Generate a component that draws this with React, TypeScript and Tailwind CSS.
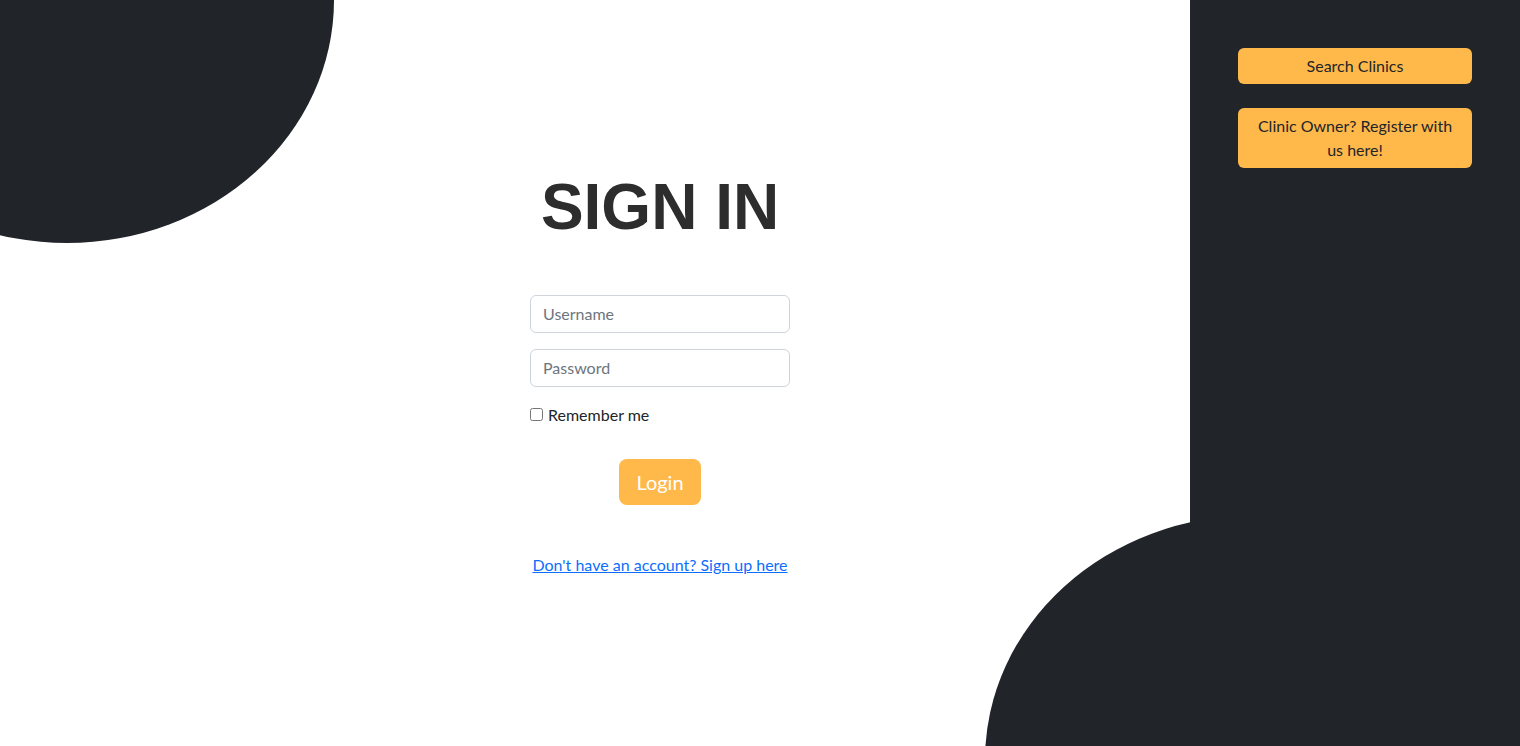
import { useState } from "react";

export default function App() {
  const [username, setUsername] = useState("");
  const [password, setPassword] = useState("");
  const [remember, setRemember] = useState(false);

  return (
    <div className="relative flex h-[746px] w-full overflow-hidden bg-white font-['Lato',sans-serif] text-[#212529]">
      {/* decorative blobs */}
      <div className="pointer-events-none absolute left-[-200px] top-[-243px] h-[486px] w-[534px] rounded-[50%] bg-[#212529]" />
      <div className="pointer-events-none absolute left-[985px] top-[515px] h-[490px] w-[540px] rounded-[50%] bg-[#212529]" />

      {/* main */}
      <div className="relative z-10 flex w-[1190px] shrink-0 flex-col items-center pl-[130px] pt-[169px]">
        <h1 className="font-['Liberation_Sans',Arial,sans-serif] text-[64px] font-bold leading-[1.2] text-[#2d2d2d]">
          SIGN IN
        </h1>

        <form
          className="mt-[49px] flex w-[260px] flex-col"
          onSubmit={(e) => e.preventDefault()}
        >
          <input
            type="text"
            placeholder="Username"
            value={username}
            onChange={(e) => setUsername(e.target.value)}
            className="h-[38px] w-full rounded-md border border-[#ced4da] bg-white px-3 text-base text-[#212529] placeholder:text-[#6c757d] focus:outline-none"
          />
          <input
            type="password"
            placeholder="Password"
            value={password}
            onChange={(e) => setPassword(e.target.value)}
            className="mt-4 h-[38px] w-full rounded-md border border-[#ced4da] bg-white px-3 text-base text-[#212529] placeholder:text-[#6c757d] focus:outline-none"
          />

          <label className="mt-4 flex items-center gap-[5px] text-base leading-6">
            <input
              type="checkbox"
              checked={remember}
              onChange={(e) => setRemember(e.target.checked)}
              className="h-[13px] w-[13px]"
            />
            Remember me
          </label>

          <div className="mt-8 flex justify-center">
            <button
              type="submit"
              className="h-[46px] w-[82px] rounded-lg bg-[#ffb84a] text-xl leading-[30px] text-white"
            >
              Login
            </button>
          </div>

          <div className="mt-12 whitespace-nowrap text-center leading-6">
            <a href="#" className="text-base text-[#0d6efd] underline">
              Don't have an account? Sign up here
            </a>
          </div>
        </form>
      </div>

      {/* sidebar */}
      <aside className="relative z-10 flex w-[330px] shrink-0 flex-col gap-6 bg-[#212529] px-12 pt-12">
        <button className="rounded-md bg-[#ffb84a] px-3 py-1.5 text-base leading-6 text-[#212529]">
          Search Clinics
        </button>
        <button className="rounded-md bg-[#ffb84a] px-3 py-1.5 text-base leading-6 text-[#212529]">
          Clinic Owner? Register with us here!
        </button>
      </aside>
    </div>
  );
}
